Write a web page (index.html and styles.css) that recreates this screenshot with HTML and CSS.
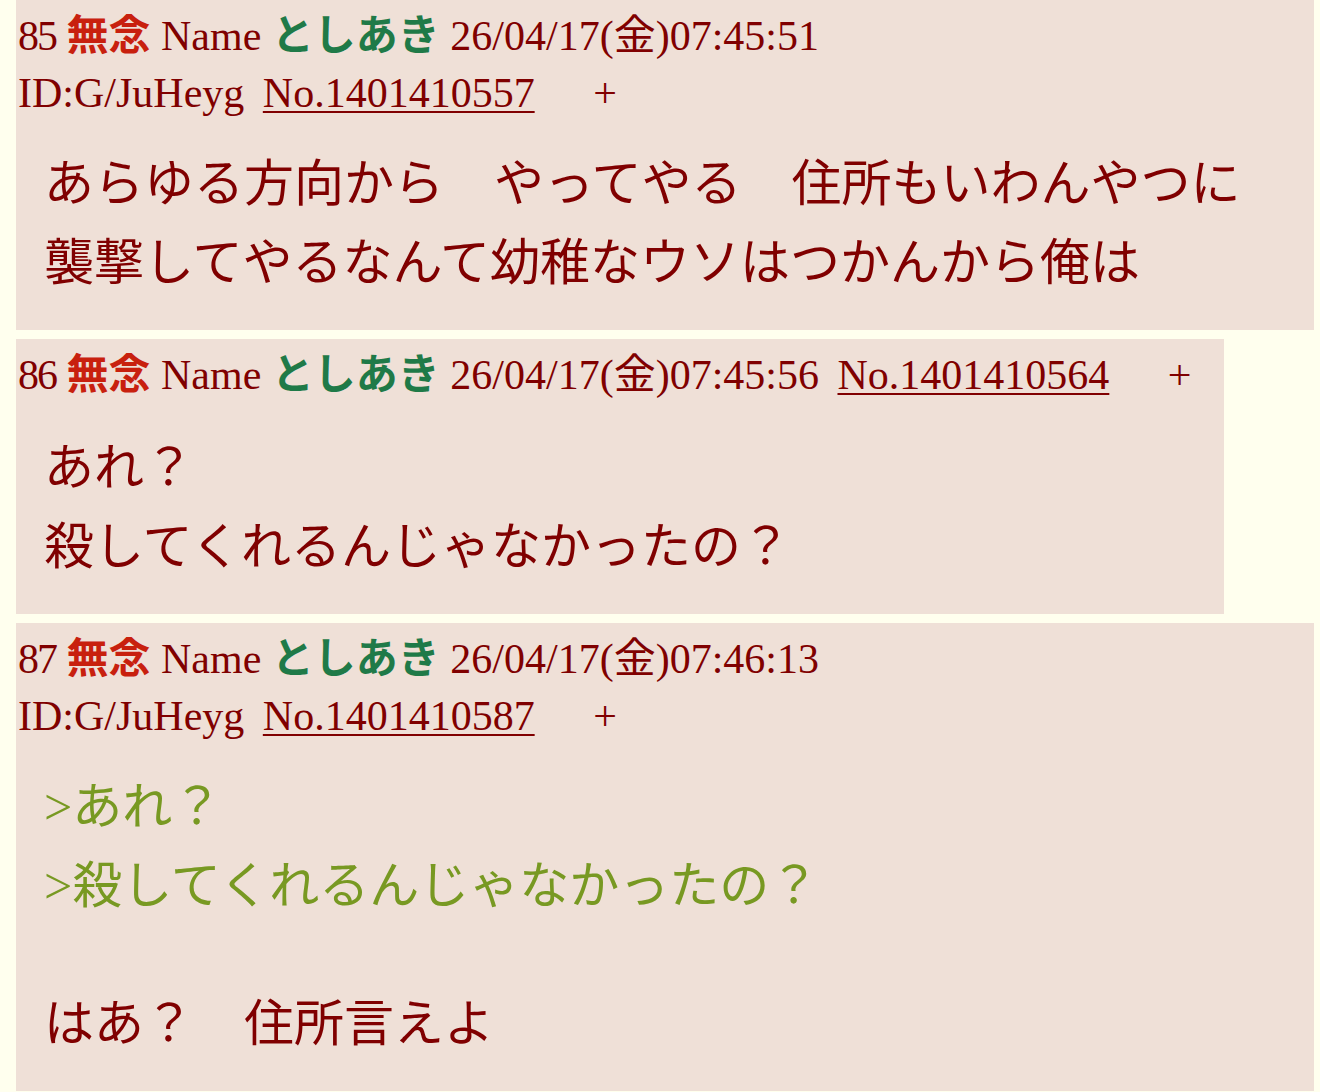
FILE: index.html
```html
<!DOCTYPE html>
<html lang="ja">
<head>
<meta charset="utf-8">
<title>スレッド</title>
<link rel="stylesheet" href="styles.css">
</head>
<body>
<div class="thread">
  <div class="post">
    <div class="post-head"><span class="num">85</span> <span class="subject">無念</span> Name <span class="name">としあき</span> 26/04/17(金)07:45:51 <span class="nowrap">ID:G/JuHeyg <a class="no" href="#">No.1401410557</a> <a class="del" href="#">+</a></span></div>
    <div class="post-body">あらゆる方向から　やってやる　住所もいわんやつに<br>襲撃してやるなんて幼稚なウソはつかんから俺は</div>
  </div>
  <div class="post">
    <div class="post-head"><span class="num">86</span> <span class="subject">無念</span> Name <span class="name">としあき</span> 26/04/17(金)07:45:56 <a class="no" href="#">No.1401410564</a> <a class="del" href="#">+</a></div>
    <div class="post-body">あれ？<br>殺してくれるんじゃなかったの？</div>
  </div>
  <div class="post">
    <div class="post-head"><span class="num">87</span> <span class="subject">無念</span> Name <span class="name">としあき</span> 26/04/17(金)07:46:13 <span class="nowrap">ID:G/JuHeyg <a class="no" href="#">No.1401410587</a> <a class="del" href="#">+</a></span></div>
    <div class="post-body"><span class="quote">&gt;あれ？</span><br><span class="quote">&gt;殺してくれるんじゃなかったの？</span><div class="blank-line"></div>はあ？　住所言えよ</div>
  </div>
</div>
</body>
</html>
```
FILE: styles.css
```css
html, body {
  margin: 0;
  padding: 0;
  background: #FFFFEE;
}
body {
  font-family: "Liberation Serif", "Noto Sans CJK JP", serif;
  color: #800000;
}
.thread {
  display: flex;
  flex-direction: column;
  align-items: flex-start;
  gap: 9px;
  padding: 0 6px 0 16px;
}
.post {
  background: #EFE0D7;
  max-width: 100%;
  box-sizing: border-box;
  padding: 7px 32px 0 2px;
}
.post-head {
  font-size: 42px;
  line-height: 55px;
}
.num {
  letter-spacing: -2px;
}
.subject {
  color: #C8200E;
  font-weight: bold;
  line-height: 59px;
}
.name {
  color: #1F7A48;
  font-weight: bold;
  line-height: 59px;
}
.nowrap {
  white-space: nowrap;
}
.no {
  color: #800000;
  text-decoration: underline;
  text-decoration-thickness: 2px;
  text-underline-offset: 4px;
  margin-left: 8px;
}
.del {
  color: #800000;
  text-decoration: none;
  margin-left: 48px;
}
.post-body {
  font-size: 50px;
  line-height: 79px;
  margin: 24px 0 27px 26px;
}
.blank-line {
  height: 59px;
}
.quote {
  color: #789922;
}
```
